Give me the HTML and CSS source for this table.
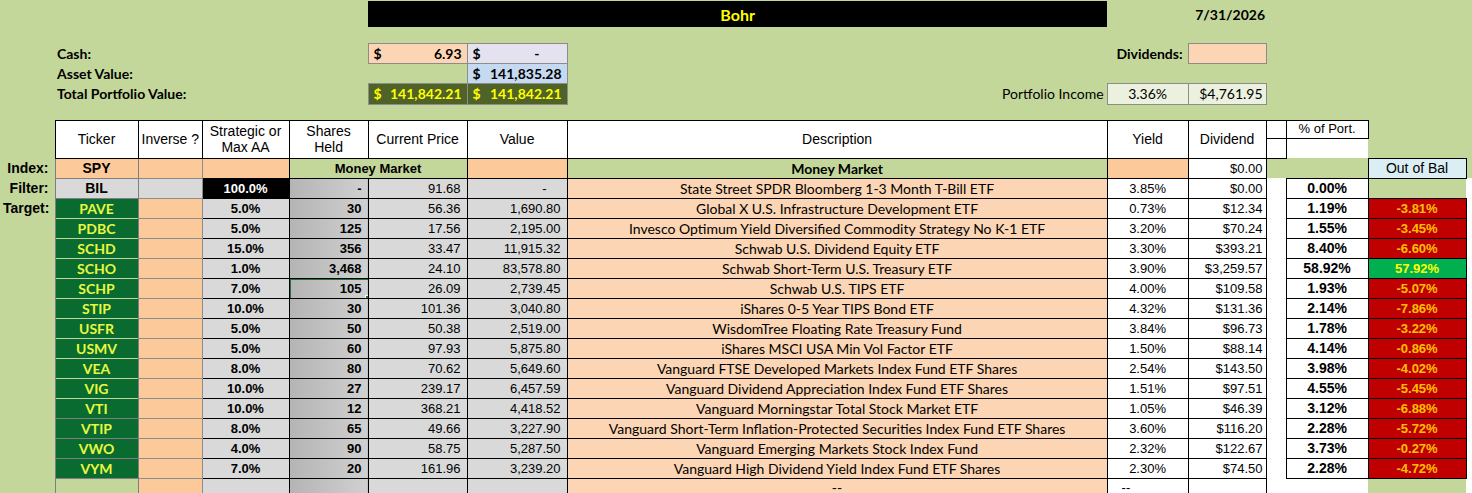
FILE: index.html
```html
<!DOCTYPE html>
<html>
<head>
<meta charset="utf-8">
<title>Bohr</title>
<link rel="stylesheet" href="styles.css">
</head>
<body>
<table class="sheet">
  <colgroup>
    <col class="c-lbl"><col class="c-tick"><col class="c-inv"><col class="c-strat"><col class="c-shares"><col class="c-price"><col class="c-value"><col class="c-desc"><col class="c-yield"><col class="c-div"><col class="c-gap"><col class="c-port"><col class="c-bal"><col class="c-end">
  </colgroup>
  <tr class="r-title">
    <td colspan="5"></td>
    <td colspan="3" class="title">Bohr</td>
    <td></td>
    <td class="date">7/31/2026</td>
    <td colspan="4"></td>
  </tr>
  <tr class="r-space"><td colspan="14"></td></tr>
  <tr class="r-top">
    <td></td>
    <td colspan="4" class="toplabel">Cash:</td>
    <td class="acct cash"><div class="acc"><span>$</span><span>6.93</span></div></td>
    <td class="acct lav"><div class="acc"><span>$</span><span class="dash">-</span></div></td>
    <td></td>
    <td class="toplabel right">Dividends:</td>
    <td class="acct cash"></td>
    <td colspan="4"></td>
  </tr>
  <tr class="r-top">
    <td></td>
    <td colspan="4" class="toplabel">Asset Value:</td>
    <td></td>
    <td class="acct blue"><div class="acc"><span>$</span><span>141,835.28</span></div></td>
    <td colspan="7"></td>
  </tr>
  <tr class="r-top2">
    <td></td>
    <td colspan="4" class="toplabel">Total Portfolio Value:</td>
    <td class="acct olive"><div class="acc"><span>$</span><span>141,842.21</span></div></td>
    <td class="acct olive"><div class="acc"><span>$</span><span>141,842.21</span></div></td>
    <td class="toplabel right light">Portfolio Income</td>
    <td class="income center">3.36%</td>
    <td class="income right">$4,761.95</td>
    <td colspan="4"></td>
  </tr>
  <tr class="r-space"><td colspan="14"></td></tr>
  <tr class="r-h1">
    <td rowspan="2"></td>
    <td rowspan="2" class="th">Ticker</td>
    <td rowspan="2" class="th">Inverse ?</td>
    <td rowspan="2" class="th two">Strategic or<br>Max AA</td>
    <td rowspan="2" class="th two">Shares<br>Held</td>
    <td rowspan="2" class="th">Current Price</td>
    <td rowspan="2" class="th">Value</td>
    <td rowspan="2" class="th">Description</td>
    <td rowspan="2" class="th">Yield</td>
    <td rowspan="2" class="th">Dividend</td>
    <td class="th"></td>
    <td class="th small">% of Port.</td>
    <td rowspan="2"></td>
    <td rowspan="2"></td>
  </tr>
  <tr class="r-h2">
    <td class="th"></td>
    <td class="porth2"></td>
  </tr>
  <tr class="r">
    <td class="lbl">Index:</td>
    <td class="tk orange">SPY</td>
    <td class="inv"></td>
    <td class="st orange"></td>
    <td colspan="2" class="mm">Money Market</td>
    <td class="val orange"></td>
    <td class="desc mmdesc">Money Market</td>
    <td class="yl orange"></td>
    <td class="dv">$0.00</td>
    <td></td>
    <td></td>
    <td class="bal head">Out of Bal</td>
    <td></td>
  </tr>
  <tr class="r">
    <td class="lbl">Filter:</td>
    <td class="tk gray">BIL</td>
    <td class="inv gray"></td>
    <td class="st black">100.0%</td>
    <td class="sh">-</td>
    <td class="pr">91.68</td>
    <td class="val dashv">-</td>
    <td class="desc">State Street SPDR Bloomberg 1-3 Month T-Bill ETF</td>
    <td class="yl">3.85%</td>
    <td class="dv">$0.00</td>
    <td class="gap"></td>
    <td class="pt">0.00%</td>
    <td></td>
    <td class="end"></td>
  </tr>
  <tr class="r">
    <td class="lbl">Target:</td>
    <td class="tk green">PAVE</td>
    <td class="inv"></td>
    <td class="st">5.0%</td>
    <td class="sh">30</td>
    <td class="pr">56.36</td>
    <td class="val">1,690.80</td>
    <td class="desc">Global X U.S. Infrastructure Development ETF</td>
    <td class="yl">0.73%</td>
    <td class="dv">$12.34</td>
    <td class="gap"></td>
    <td class="pt">1.19%</td>
    <td class="bal neg">-3.81%</td>
    <td class="end"></td>
  </tr>
  <tr class="r">
    <td></td>
    <td class="tk green">PDBC</td>
    <td class="inv"></td>
    <td class="st">5.0%</td>
    <td class="sh">125</td>
    <td class="pr">17.56</td>
    <td class="val">2,195.00</td>
    <td class="desc">Invesco Optimum Yield Diversified Commodity Strategy No K-1 ETF</td>
    <td class="yl">3.20%</td>
    <td class="dv">$70.24</td>
    <td class="gap"></td>
    <td class="pt">1.55%</td>
    <td class="bal neg">-3.45%</td>
    <td class="end"></td>
  </tr>
  <tr class="r">
    <td></td>
    <td class="tk green">SCHD</td>
    <td class="inv"></td>
    <td class="st">15.0%</td>
    <td class="sh">356</td>
    <td class="pr">33.47</td>
    <td class="val">11,915.32</td>
    <td class="desc">Schwab U.S. Dividend Equity ETF</td>
    <td class="yl">3.30%</td>
    <td class="dv">$393.21</td>
    <td class="gap"></td>
    <td class="pt">8.40%</td>
    <td class="bal neg">-6.60%</td>
    <td class="end"></td>
  </tr>
  <tr class="r">
    <td></td>
    <td class="tk green">SCHO</td>
    <td class="inv"></td>
    <td class="st">1.0%</td>
    <td class="sh">3,468</td>
    <td class="pr">24.10</td>
    <td class="val">83,578.80</td>
    <td class="desc">Schwab Short-Term U.S. Treasury ETF</td>
    <td class="yl">3.90%</td>
    <td class="dv">$3,259.57</td>
    <td class="gap"></td>
    <td class="pt">58.92%</td>
    <td class="bal pos">57.92%</td>
    <td class="end"></td>
  </tr>
  <tr class="r">
    <td></td>
    <td class="tk green">SCHP</td>
    <td class="inv"></td>
    <td class="st">7.0%</td>
    <td class="sh selected">105</td>
    <td class="pr">26.09</td>
    <td class="val">2,739.45</td>
    <td class="desc">Schwab U.S. TIPS ETF</td>
    <td class="yl">4.00%</td>
    <td class="dv">$109.58</td>
    <td class="gap"></td>
    <td class="pt">1.93%</td>
    <td class="bal neg">-5.07%</td>
    <td class="end"></td>
  </tr>
  <tr class="r">
    <td></td>
    <td class="tk green">STIP</td>
    <td class="inv"></td>
    <td class="st">10.0%</td>
    <td class="sh">30</td>
    <td class="pr">101.36</td>
    <td class="val">3,040.80</td>
    <td class="desc">iShares 0-5 Year TIPS Bond ETF</td>
    <td class="yl">4.32%</td>
    <td class="dv">$131.36</td>
    <td class="gap"></td>
    <td class="pt">2.14%</td>
    <td class="bal neg">-7.86%</td>
    <td class="end"></td>
  </tr>
  <tr class="r">
    <td></td>
    <td class="tk green">USFR</td>
    <td class="inv"></td>
    <td class="st">5.0%</td>
    <td class="sh">50</td>
    <td class="pr">50.38</td>
    <td class="val">2,519.00</td>
    <td class="desc">WisdomTree Floating Rate Treasury Fund</td>
    <td class="yl">3.84%</td>
    <td class="dv">$96.73</td>
    <td class="gap"></td>
    <td class="pt">1.78%</td>
    <td class="bal neg">-3.22%</td>
    <td class="end"></td>
  </tr>
  <tr class="r">
    <td></td>
    <td class="tk green">USMV</td>
    <td class="inv"></td>
    <td class="st">5.0%</td>
    <td class="sh">60</td>
    <td class="pr">97.93</td>
    <td class="val">5,875.80</td>
    <td class="desc">iShares MSCI USA Min Vol Factor ETF</td>
    <td class="yl">1.50%</td>
    <td class="dv">$88.14</td>
    <td class="gap"></td>
    <td class="pt">4.14%</td>
    <td class="bal neg">-0.86%</td>
    <td class="end"></td>
  </tr>
  <tr class="r">
    <td></td>
    <td class="tk green">VEA</td>
    <td class="inv"></td>
    <td class="st">8.0%</td>
    <td class="sh">80</td>
    <td class="pr">70.62</td>
    <td class="val">5,649.60</td>
    <td class="desc">Vanguard FTSE Developed Markets Index Fund ETF Shares</td>
    <td class="yl">2.54%</td>
    <td class="dv">$143.50</td>
    <td class="gap"></td>
    <td class="pt">3.98%</td>
    <td class="bal neg">-4.02%</td>
    <td class="end"></td>
  </tr>
  <tr class="r">
    <td></td>
    <td class="tk green">VIG</td>
    <td class="inv"></td>
    <td class="st">10.0%</td>
    <td class="sh">27</td>
    <td class="pr">239.17</td>
    <td class="val">6,457.59</td>
    <td class="desc">Vanguard Dividend Appreciation Index Fund ETF Shares</td>
    <td class="yl">1.51%</td>
    <td class="dv">$97.51</td>
    <td class="gap"></td>
    <td class="pt">4.55%</td>
    <td class="bal neg">-5.45%</td>
    <td class="end"></td>
  </tr>
  <tr class="r">
    <td></td>
    <td class="tk green lined">VTI</td>
    <td class="inv"></td>
    <td class="st">10.0%</td>
    <td class="sh">12</td>
    <td class="pr">368.21</td>
    <td class="val">4,418.52</td>
    <td class="desc">Vanguard Morningstar Total Stock Market ETF</td>
    <td class="yl">1.05%</td>
    <td class="dv">$46.39</td>
    <td class="gap"></td>
    <td class="pt">3.12%</td>
    <td class="bal neg">-6.88%</td>
    <td class="end"></td>
  </tr>
  <tr class="r">
    <td></td>
    <td class="tk green lined">VTIP</td>
    <td class="inv"></td>
    <td class="st">8.0%</td>
    <td class="sh">65</td>
    <td class="pr">49.66</td>
    <td class="val">3,227.90</td>
    <td class="desc">Vanguard Short-Term Inflation-Protected Securities Index Fund ETF Shares</td>
    <td class="yl">3.60%</td>
    <td class="dv">$116.20</td>
    <td class="gap"></td>
    <td class="pt">2.28%</td>
    <td class="bal neg">-5.72%</td>
    <td class="end"></td>
  </tr>
  <tr class="r">
    <td></td>
    <td class="tk green lined">VWO</td>
    <td class="inv"></td>
    <td class="st">4.0%</td>
    <td class="sh">90</td>
    <td class="pr">58.75</td>
    <td class="val">5,287.50</td>
    <td class="desc">Vanguard Emerging Markets Stock Index Fund</td>
    <td class="yl">2.32%</td>
    <td class="dv">$122.67</td>
    <td class="gap"></td>
    <td class="pt">3.73%</td>
    <td class="bal neg">-0.27%</td>
    <td class="end"></td>
  </tr>
  <tr class="r">
    <td></td>
    <td class="tk green lined">VYM</td>
    <td class="inv"></td>
    <td class="st">7.0%</td>
    <td class="sh">20</td>
    <td class="pr">161.96</td>
    <td class="val">3,239.20</td>
    <td class="desc">Vanguard High Dividend Yield Index Fund ETF Shares</td>
    <td class="yl">2.30%</td>
    <td class="dv">$74.50</td>
    <td class="gap"></td>
    <td class="pt">2.28%</td>
    <td class="bal neg">-4.72%</td>
    <td class="end"></td>
  </tr>
  <tr class="r r-last">
    <td></td>
    <td class="tk lined"></td>
    <td class="inv"></td>
    <td class="st"></td>
    <td class="sh"></td>
    <td class="pr"></td>
    <td class="val"></td>
    <td class="desc">--</td>
    <td class="yl left">--</td>
    <td class="dv"></td>
    <td class="gap"></td>
    <td class="gap"></td>
    <td></td>
    <td class="end"></td>
  </tr>
</table>
</body>
</html>
```
FILE: styles.css
```css
body {
  margin: 0;
  background: #c4d79b;
}

.sheet {
  border-collapse: collapse;
  table-layout: fixed;
  width: 1472px;
  margin-top: 1px;
  font-family: "Liberation Sans", Arial, sans-serif;
  font-size: 13px;
  color: #000;
}

.c-lbl { width: 55px; }
.c-tick { width: 83px; }
.c-inv { width: 64px; }
.c-strat { width: 87px; }
.c-shares { width: 79px; }
.c-price { width: 99px; }
.c-value { width: 100px; }
.c-desc { width: 540px; }
.c-yield { width: 81px; }
.c-div { width: 78px; }
.c-gap { width: 20px; }
.c-port { width: 82px; }
.c-bal { width: 98px; }
.c-end { width: 6px; }

td {
  padding: 0 3px;
  white-space: nowrap;
  overflow: hidden;
  vertical-align: middle;
}

.r-title { height: 26px; }
.r-space { height: 16px; }
.r-top { height: 20px; }
.r-top2 { height: 21px; }
.r-h1 { height: 18px; }
.r-h2 { height: 20px; }
.r { height: 20px; }
.r-last td { vertical-align: top; line-height: 14px; padding-top: 2px; }

/* top block */
.title {
  background: #000;
  color: #ffff00;
  text-align: center;
  font-family: Lato, "Liberation Sans", sans-serif;
  font-weight: 700;
  font-size: 16px;
}
.date {
  text-align: right;
  font-family: Lato, "Liberation Sans", sans-serif;
  font-weight: 700;
  font-size: 14px;
  padding-right: 1px;
}
.toplabel {
  font-family: Lato, "Liberation Sans", sans-serif;
  font-weight: 700;
  font-size: 14px;
  padding-left: 2px;
}
.toplabel.right { text-align: right; padding-right: 5px; }
.toplabel.light { font-weight: 400; padding-right: 3px; }

.acct {
  border: 1px solid #8c8c8c;
  font-family: Lato, "Liberation Sans", sans-serif;
  font-weight: 700;
  font-size: 14px;
  padding: 0 5px;
}
.acc {
  display: flex;
  justify-content: space-between;
}
.acc .dash { padding-right: 22px; }
.cash { background: #fcd5b4; }
.lav { background: #e4e2ef; }
.blue { background: #c5d9f1; }
.olive { background: #4f6228; color: #ffff00; }

.income {
  background: #ebf1de;
  border: 1px solid #8c8c8c;
  font-family: Lato, "Liberation Sans", sans-serif;
  font-size: 14px;
}
.center { text-align: center; }
.right { text-align: right; }

/* header */
.th {
  background: #fff;
  border: 1px solid #000;
  text-align: center;
  font-size: 14px;
  line-height: 16px;
}
.th.small { font-size: 13px; line-height: 14px; }
.porth2 {
  background: #fff;
  border-left: 1px solid #000;
}

/* body */
.lbl {
  text-align: right;
  font-weight: 700;
  font-size: 14px;
  padding-right: 6px;
}
.tk {
  text-align: center;
  font-weight: 700;
  font-size: 14px;
  border: 1px solid #7f7f7f;
  border-top-color: transparent;
  border-bottom-color: transparent;
}
.tk.orange, .tk.gray { border-color: #7f7f7f; }
.tk.lined { border-top-color: #7f7f7f; border-bottom-color: #7f7f7f; }
.tk.green {
  background: #0a6b30;
  color: #e8f840;
  font-family: Lato, "Liberation Sans", sans-serif;
  font-size: 14px;
}
.orange { background: #fcc99b; }
.gray { background: #d9d9d9; }
.black { background: #000; color: #fff; }

.inv {
  background: #fcc99b;
  border: 1px solid #8c8c8c;
}
.inv.gray { background: #d9d9d9; }

.st {
  background: #d9d9d9;
  border: 1px solid #000;
  text-align: center;
  font-weight: 700;
}
.st.orange { background: #fcc99b; }
.st.black { background: #000; color: #fff; }

.sh {
  background: linear-gradient(90deg, #b4b4b4, #d0d0d0);
  border: 1px solid #000;
  text-align: right;
  font-weight: 700;
  padding-right: 6px;
}
.selected { position: relative; }
.selected::after {
  content: "";
  position: absolute;
  left: -1px;
  top: -1px;
  right: -2px;
  bottom: -2px;
  border: 2px solid #217346;
}
.selected::before {
  content: "";
  position: absolute;
  right: -4px;
  bottom: -4px;
  width: 5px;
  height: 5px;
  background: #217346;
  border: 1px solid #fff;
  z-index: 1;
}

.mm {
  background: #c4d79b;
  border: 1px solid #000;
  text-align: center;
  font-weight: 700;
}

.pr, .val {
  background: #d9d9d9;
  border: 1px solid #000;
  text-align: right;
  padding-right: 6px;
}
.val.orange { background: #fcc99b; }
.val.dashv { padding-right: 20px; }

.desc {
  background: #fcd5b4;
  border: 1px solid #000;
  text-align: center;
  font-family: Lato, "Liberation Sans", sans-serif;
  font-size: 14px;
}
.mmdesc { background: #c4d79b; font-weight: 700; }

.yl {
  background: #fff;
  border: 1px solid #000;
  text-align: center;
}
.yl.orange { background: #fcc99b; }
.yl.left { text-align: left; padding-left: 14px; }
.dv {
  background: #fff;
  border: 1px solid #000;
  text-align: right;
  padding-right: 3px;
}
.gap { background: #fff; }
.end { background: #fff; }

.pt {
  background: #fff;
  border: 1px solid #000;
  text-align: center;
  font-weight: 700;
  font-size: 14px;
}

.bal {
  border: 1px solid #000;
  text-align: center;
  font-weight: 700;
}
.bal.head {
  background: #dbeef4;
  font-weight: 400;
  font-size: 14px;
}
.bal.neg { background: #c00000; color: #ffc000; }
.bal.pos { background: #00b050; color: #ffff00; }
```
